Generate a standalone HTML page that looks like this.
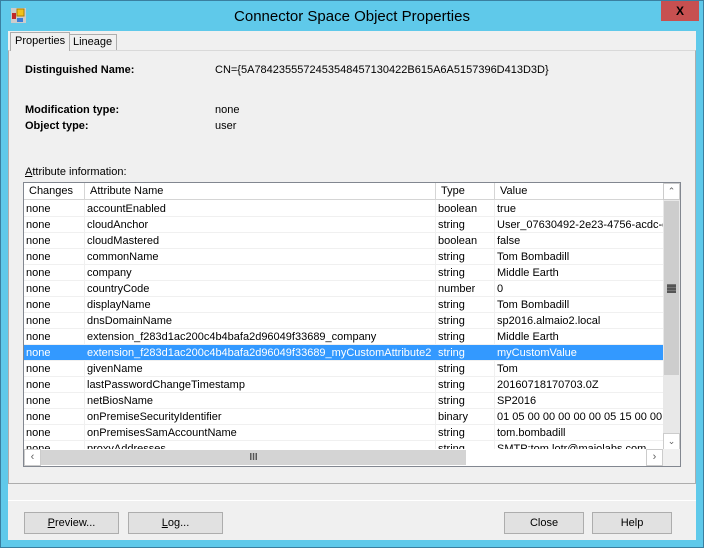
<!DOCTYPE html>
<html><head><style>
*{box-sizing:border-box;margin:0;padding:0}
body{width:704px;height:548px;background:#5fc9ea;font-family:"Liberation Sans",sans-serif;font-size:11px;color:#000;position:relative;overflow:hidden}
.a{position:absolute}
.outer{left:0;top:0;width:704px;height:548px;border:1px solid #3a7fa0}
.client{left:8px;top:31px;width:688px;height:509px;background:#f0f0f0}
.title{left:0;top:8px;width:704px;text-align:center;font-size:15px;color:#000}
.close{left:661px;top:1px;width:38px;height:20px;background:#c75050;color:#000;font-weight:bold;text-align:center;font-size:12px;line-height:20px}
.tab{height:18px;border:1px solid #adadad;border-bottom:none;background:#f0f0f0;padding:2px 4px;font-size:11px}
.b{font-weight:bold}
.lv{left:23px;top:182px;width:658px;height:285px;border:1px solid #828790;background:#fff;overflow:hidden}
.hdr{position:absolute;top:0;height:17px;border-right:1px solid #d5d5d5;border-bottom:1px solid #d5d5d5;padding:2px 5px;background:#fff}
.row{position:absolute;left:0;width:640px;height:16px;border-bottom:1px solid #f0f0f0}
.row span{position:absolute;top:2px;white-space:nowrap;overflow:hidden}
.sel{background:#3399ff;color:#fff}
.btn{position:absolute;top:512px;height:22px;border:1px solid #adadad;background:#e1e1e1;text-align:center;line-height:20px;font-size:11px;outline:1px solid #f0f0f0}
.sb{background:#e8e8e8;position:absolute}
</style></head><body>
<div class="a outer"></div>
<svg class="a" style="left:11px;top:8px" width="16" height="16"><rect x="0" y="0" width="15" height="15" fill="#ccc"/><rect x="6" y="1" width="7" height="7" fill="#f2c21a" stroke="#b08000"/><rect x="1" y="5" width="4" height="6" fill="#c0282a"/><rect x="6" y="10" width="6" height="4" fill="#3b7dd8"/></svg>
<div class="a title">Connector Space Object Properties</div>
<div class="a close">X</div>
<div class="a client"></div>
<div class="a" style="left:8px;top:50px;width:688px;height:434px;border:1px solid #adadad;border-top-color:#d9d9d9;background:#f0f0f0"></div>
<div class="a tab" style="left:10px;top:32px;height:19px;background:#f0f0f0;border-color:#adadad;z-index:2">Properties</div>
<div class="a tab" style="left:68px;top:34px;height:16px;padding-top:1px;background:#f0f0f0">Lineage</div>
<div class="a b" style="left:25px;top:64px">Distinguished Name:</div>
<div class="a" style="left:215px;top:64px">CN={5A7842355572453548457130422B615A6A5157396D413D3D}</div>
<div class="a b" style="left:25px;top:104px">Modification type:</div>
<div class="a" style="left:215px;top:104px">none</div>
<div class="a b" style="left:25px;top:120px">Object type:</div>
<div class="a" style="left:215px;top:120px">user</div>
<div class="a" style="left:25px;top:166px"><u>A</u>ttribute information:</div>
<div class="a lv">
<div class="hdr" style="left:0;width:61px">Changes</div>
<div class="hdr" style="left:61px;width:351px">Attribute Name</div>
<div class="hdr" style="left:412px;width:59px">Type</div>
<div class="hdr" style="left:471px;width:170px">Value</div>
<div style="position:absolute;left:60px;top:17px;width:1px;height:250px;background:#f0f0f0"></div>
<div style="position:absolute;left:411px;top:17px;width:1px;height:250px;background:#f0f0f0"></div>
<div style="position:absolute;left:470px;top:17px;width:1px;height:250px;background:#f0f0f0"></div>
<div id="rows"></div>
<div class="sb" style="left:639px;top:0;width:17px;height:267px"></div>
<div style="position:absolute;left:639px;top:0;width:17px;height:17px;background:#fff;border:1px solid #ccc;text-align:center;font-size:9px;color:#606060;line-height:15px">⌃</div>
<div style="position:absolute;left:640px;top:18px;width:15px;height:174px;background:#cdcdcd"></div>
<div style="position:absolute;left:643px;top:100px;width:8px;font-size:9px;color:#555;line-height:3px">▬<br>▬<br>▬</div>
<div style="position:absolute;left:639px;top:250px;width:17px;height:17px;background:#fff;border:1px solid #ccc;text-align:center;font-size:9px;color:#606060;line-height:15px">⌄</div>
<div class="sb" style="left:0;top:266px;width:639px;height:17px;background:#fff"></div>
<div style="position:absolute;left:0;top:266px;width:17px;height:17px;background:#fff;border:1px solid #ccc;text-align:center;color:#606060;line-height:15px">&lsaquo;</div>
<div style="position:absolute;left:17px;top:267px;width:425px;height:15px;background:#d4d4d4;text-align:center;color:#555;font-size:10px;line-height:15px;font-weight:bold">III</div>
<div style="position:absolute;left:622px;top:266px;width:17px;height:17px;background:#fff;border:1px solid #ccc;text-align:center;color:#606060;line-height:15px">&rsaquo;</div>
<div class="sb" style="left:639px;top:266px;width:17px;height:17px;background:#f0f0f0"></div>
</div>
<div class="a" style="left:8px;top:500px;width:688px;height:1px;background:#a0a0a0;border-bottom:1px solid #fff"></div>
<div class="btn" style="left:24px;width:95px"><u>P</u>review...</div>
<div class="btn" style="left:128px;width:95px"><u>L</u>og...</div>
<div class="btn" style="left:504px;width:80px">Close</div>
<div class="btn" style="left:592px;width:80px">Help</div>
<script>
var d=[["accountEnabled","boolean","true"],["cloudAnchor","string","User_07630492-2e23-4756-acdc-c"],["cloudMastered","boolean","false"],["commonName","string","Tom Bombadill"],["company","string","Middle Earth"],["countryCode","number","0"],["displayName","string","Tom Bombadill"],["dnsDomainName","string","sp2016.almaio2.local"],["extension_f283d1ac200c4b4bafa2d96049f33689_company","string","Middle Earth"],["extension_f283d1ac200c4b4bafa2d96049f33689_myCustomAttribute2","string","myCustomValue"],["givenName","string","Tom"],["lastPasswordChangeTimestamp","string","20160718170703.0Z"],["netBiosName","string","SP2016"],["onPremiseSecurityIdentifier","binary","01 05 00 00 00 00 00 05 15 00 00"],["onPremisesSamAccountName","string","tom.bombadill"],["proxyAddresses","string","SMTP:tom.lotr@maiolabs.com"]];
var h="";d.forEach(function(r,i){h+='<div class="row'+(i==9?' sel':'')+'" style="top:'+(18+i*16)+'px"><span style="left:2px">none</span><span style="left:63px;width:346px">'+r[0]+'</span><span style="left:414px">'+r[1]+'</span><span style="left:473px;width:166px">'+r[2]+'</span></div>'});
document.getElementById("rows").innerHTML=h;
</script>
</body></html>
